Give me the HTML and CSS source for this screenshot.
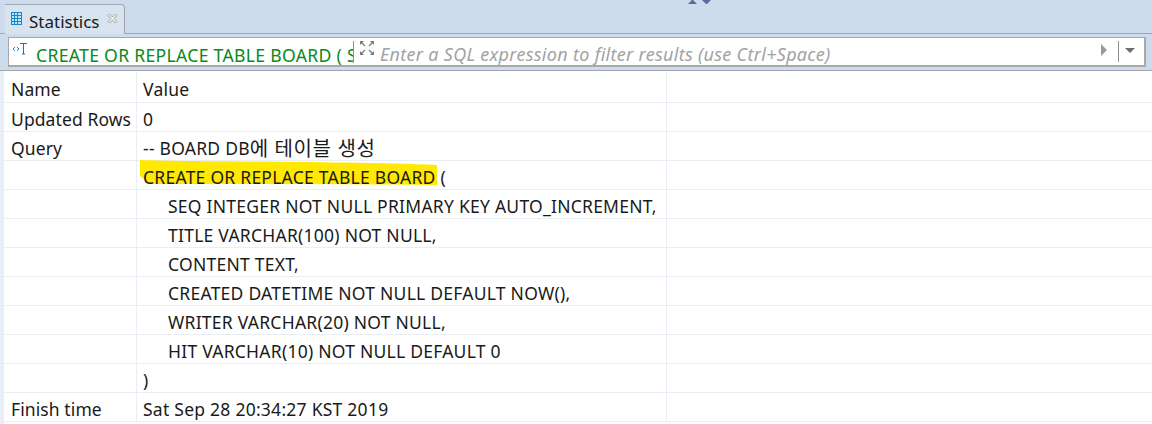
FILE: index.html
```html
<!DOCTYPE html>
<html lang="ko">
<head>
<meta charset="utf-8">
<title>Statistics</title>
<link rel="stylesheet" href="styles.css">
</head>
<body>
<div class="tabbar">
  <div class="tab">
    <svg class="tab-icon" width="12" height="14" viewBox="0 0 12 14"><rect x="0" y="0" width="11" height="13" fill="#bfe4f7"/><path d="M0 .5h11M0 3.500h11M0 6.500h11M0 9.500h11M0 12.500h11M.5 0v13M3.500 0v13M6.500 0v13M10.500 0v13" stroke="#1688cf" fill="none"/></svg>
    <span class="tab-label">Statistics</span>
    <svg class="tab-close" width="11" height="11" viewBox="0 0 11 11"><path d="M1 2.500 2.500 1 5.500 4 8.500 1 10 2.500 7 5.500 10 8.500 8.500 10 5.500 7 2.500 10 1 8.500 4 5.500Z" fill="#f4f4f4" stroke="#a0a0a0"/></svg>
  </div>
  <svg class="sash" width="26" height="6" viewBox="0 0 26 6"><path d="M1 4 5 0h1l4 4ZM15 0h9l-4 4h-1Z" fill="#65659c"/></svg>
</div>
<div class="toolbar">
  <div class="filter">
    <svg class="sql-icon" width="16" height="14" viewBox="0 0 16 14"><path d="M3 5 1 7 3 9M5 5 7 7 5 9" fill="none" stroke="#2a86c8"/><path d="M8 1.500h7M11.500 2v10M10 12h3" fill="none" stroke="#3b6f8f"/></svg>
    <span class="query-text">CREATE OR REPLACE TABLE BOARD ( SEQ</span>
    <span class="divider"></span>
    <svg class="expand" width="16" height="16" viewBox="0 0 16 16"><path d="M1 1h4L1 5ZM15 1h-4l4 4ZM1 15h4L1 11ZM15 15h-4l4-4Z" fill="#7a7a7a"/><path d="M2 2 6 6M14 2 10 6M2 14l4-4M14 14l-4-4" stroke="#7a7a7a" stroke-width="1.300"/></svg>
    <span class="placeholder">Enter a SQL expression to filter results (use Ctrl+Space)</span>
    <svg class="run" width="6" height="12" viewBox="0 0 6 12"><path d="M0 0 6 6 0 12Z" fill="#999"/></svg>
    <span class="divider small"></span>
    <svg class="drop" width="10" height="5" viewBox="0 0 10 5"><path d="M0 0H10L5 5Z" fill="#6e6e6e"/></svg>
  </div>
</div>
<div class="grid">
  <div class="row first"><div class="name">Name</div><div class="value">Value</div></div>
  <div class="row"><div class="name">Updated Rows</div><div class="value">0</div></div>
  <div class="row"><div class="name">Query</div><div class="value">-- BOARD DB<span class="ko">에 테이블 생성</span></div></div>
  <div class="row"><div class="name"></div><div class="value">CREATE OR REPLACE TABLE BOARD (</div></div>
  <div class="row"><div class="name"></div><div class="value in">SEQ INTEGER NOT NULL PRIMARY KEY AUTO_INCREMENT,</div></div>
  <div class="row"><div class="name"></div><div class="value in">TITLE VARCHAR(100) NOT NULL,</div></div>
  <div class="row"><div class="name"></div><div class="value in">CONTENT TEXT,</div></div>
  <div class="row"><div class="name"></div><div class="value in">CREATED DATETIME NOT NULL DEFAULT NOW(),</div></div>
  <div class="row"><div class="name"></div><div class="value in">WRITER VARCHAR(20) NOT NULL,</div></div>
  <div class="row"><div class="name"></div><div class="value in">HIT VARCHAR(10) NOT NULL DEFAULT 0</div></div>
  <div class="row"><div class="name"></div><div class="value">)</div></div>
  <div class="row"><div class="name">Finish time</div><div class="value">Sat Sep 28 20:34:27 KST 2019</div></div>
  <svg class="marker" width="300" height="30" viewBox="0 0 300 30"><path d="M0 0 C60 2 200 1 297 5 L297 25 C200 24 100 24 10 24 L0 16Z" fill="#ffe900"/></svg>
</div>
</body>
</html>
```
FILE: styles.css
```css
* { box-sizing: border-box; }
html, body { margin: 0; height: 424px; overflow: hidden; background: #fff; }
body { font-family: "Noto Sans", "Noto Sans CJK KR", sans-serif; font-size: 17.500px; letter-spacing: 0.250px; color: #1a1a1a; }

.tabbar { height: 34px; background: #cddcec; border-bottom: 1px solid #a2a5ad; display: flex; padding-left: 5px; position: relative; }
.tab { width: 120px; height: 30px; margin-top: 4px; background: #d8e3f0; border: 1px solid #a2a5ad; border-bottom: 0; border-left: 0; border-top-right-radius: 4px; display: flex; align-items: center; padding: 0 0 0 6px; }
.tab-icon { flex: none; margin-top: -2px; }
.tab-label { margin-left: 6px; font-size: 17px; letter-spacing: 0; margin-top: 3px; }
.tab-close { margin-left: 7px; margin-top: -2px; flex: none; }
.sash { position: absolute; left: 687px; top: 0; }

.toolbar { height: 37px; background: #cddcec; border-bottom: 1px solid #a2a5ad; padding: 3px 6px 0 8px; }
.filter { height: 30px; background: #fff; border: 1px solid #a9a9a9; border-width: 1px 2px 2px 1px; display: flex; align-items: center; padding-left: 3px; }
.sql-icon { flex: none; margin-top: -6px; }
.query-text { flex: none; width: 317px; margin: 6px 0 0 8px; overflow: hidden; white-space: nowrap; color: #0a8a20; font-size: 17.600px; letter-spacing: 0.300px; }
.divider { flex: none; width: 1px; height: 22px; background: #8f8f8f; }
.expand { flex: none; margin: -7px 0 0 5px; }
.placeholder { flex: 1; margin: 5px 0 0 5px; font-style: italic; color: #a3a3a3; font-size: 18px; letter-spacing: 0.300px; white-space: nowrap; }
.run { flex: none; margin: -3px 0 0 0; }
.divider.small { margin: 0 0 0 11px; height: 21px; }
.drop { flex: none; margin: -3px 9px 0 6px; }

.grid { position: relative; padding-left: 4px; background: linear-gradient(to right, #e8eef7 4px, #fff 4px); height: 353px; }
.row { display: flex; height: 29px; border-bottom: 1px solid #e9eef5; width: 100%; }
.row.first { height: 32px; }
.name, .value { display: flex; align-items: center; line-height: 1; white-space: nowrap; padding-top: 6px; }
.name { width: 133px; padding-left: 7px; border-right: 1px solid #e9eef5; flex: none; letter-spacing: 0.100px; }
.value { width: 530px; padding-left: 6px; border-right: 1px solid #e9eef5; flex: none; position: relative; z-index: 1; }
.value.in { padding-left: 31px; }
.ko { font-size: 20px; letter-spacing: 0.600px; }
.marker { position: absolute; left: 140px; top: 89px; z-index: 0; }
```
